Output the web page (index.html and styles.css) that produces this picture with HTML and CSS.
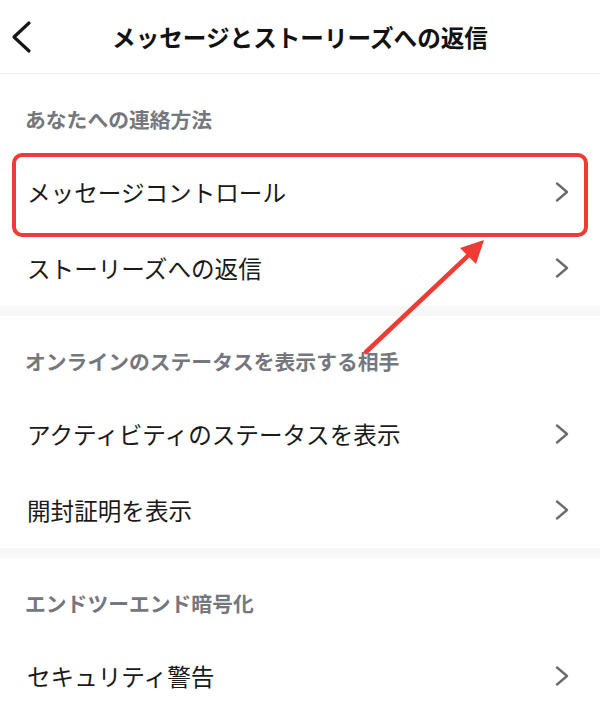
FILE: index.html
```html
<!DOCTYPE html>
<html lang="ja">

<head>
    <title>メッセージとストーリーズへの返信</title>
    <link rel="stylesheet" href="styles.css">
</head>

<body>
    <div class="page">
        <header class="topbar">
            <a class="back" href="#">
                <svg width="24" height="34" viewBox="0 0 24 34">
                    <polyline points="19,3 4,17 19,31" fill="none" stroke="#161616" stroke-width="3.2" stroke-linecap="round" stroke-linejoin="round"/>
                </svg>
            </a>
            <h1>メッセージとストーリーズへの返信</h1>
            <span></span>
        </header>

        <section class="group">
            <h2>あなたへの連絡方法</h2>
            <a class="row" href="#">メッセージコントロール<svg class="chev" width="14" height="20" viewBox="0 0 14 20"><polyline points="2,1.5 12,10 2,18.5"/></svg></a>
            <a class="row" href="#">ストーリーズへの返信<svg class="chev" width="14" height="20" viewBox="0 0 14 20"><polyline points="2,1.5 12,10 2,18.5"/></svg></a>
        </section>

        <section class="group">
            <h2>オンラインのステータスを表示する相手</h2>
            <a class="row" href="#">アクティビティのステータスを表示<svg class="chev" width="14" height="20" viewBox="0 0 14 20"><polyline points="2,1.5 12,10 2,18.5"/></svg></a>
            <a class="row" href="#">開封証明を表示<svg class="chev" width="14" height="20" viewBox="0 0 14 20"><polyline points="2,1.5 12,10 2,18.5"/></svg></a>
        </section>

        <section class="group">
            <h2>エンドツーエンド暗号化</h2>
            <a class="row" href="#">セキュリティ警告<svg class="chev" width="14" height="20" viewBox="0 0 14 20"><polyline points="2,1.5 12,10 2,18.5"/></svg></a>
        </section>

        <svg class="marks" width="600" height="726" viewBox="0 0 600 726">
            <rect x="14" y="155" width="572" height="80" rx="8" fill="none" stroke="#ee3b33" stroke-width="4"/>
            <line x1="366" y1="352" x2="472" y2="252" stroke="#ee3b33" stroke-width="4.5" stroke-linecap="round"/>
            <polygon points="484,240 476,264 460,248" fill="#ee3b33"/>
        </svg>
    </div>
</body>

</html>
```

FILE: styles.css
```css
body {
    margin: 0;
    padding: 0;
    background-color: #fff;
    font-family: "Noto Sans CJK JP", "Noto Sans", sans-serif;
    color: #1a1a1a;
}

.page {
    position: relative;
    width: 600px;
    height: 726px;
    overflow: hidden;
}

.topbar {
    display: grid;
    grid-template-columns: 1fr auto 1fr;
    align-items: center;
    height: 73px;
    border-bottom: 1px solid #f0f0f0;
    padding: 0 0 0 10px;
}

.back {
    display: flex;
    align-items: center;
}

.topbar h1 {
    margin: 0;
    font-size: 23.6px;
    font-weight: 700;
    color: #121212;
    line-height: 30px;
    margin-left: -10px;
}

.group + .group {
    border-top: 10px solid #f7f7f7;
}

.group h2 {
    margin: 0;
    padding: 31px 25px 21px;
    font-size: 20.8px;
    line-height: 28px;
    font-weight: 700;
    color: #74777e;
}

.row {
    display: flex;
    align-items: center;
    justify-content: space-between;
    height: 76px;
    padding: 0 31px 0 27px;
    font-size: 23.6px;
    color: #1a1a1a;
    text-decoration: none;
}

.chev polyline {
    fill: none;
    stroke: #6a6a6a;
    stroke-width: 2.3;
    stroke-linecap: round;
    stroke-linejoin: round;
}

.marks {
    position: absolute;
    top: 0;
    left: 0;
    pointer-events: none;
}
```
